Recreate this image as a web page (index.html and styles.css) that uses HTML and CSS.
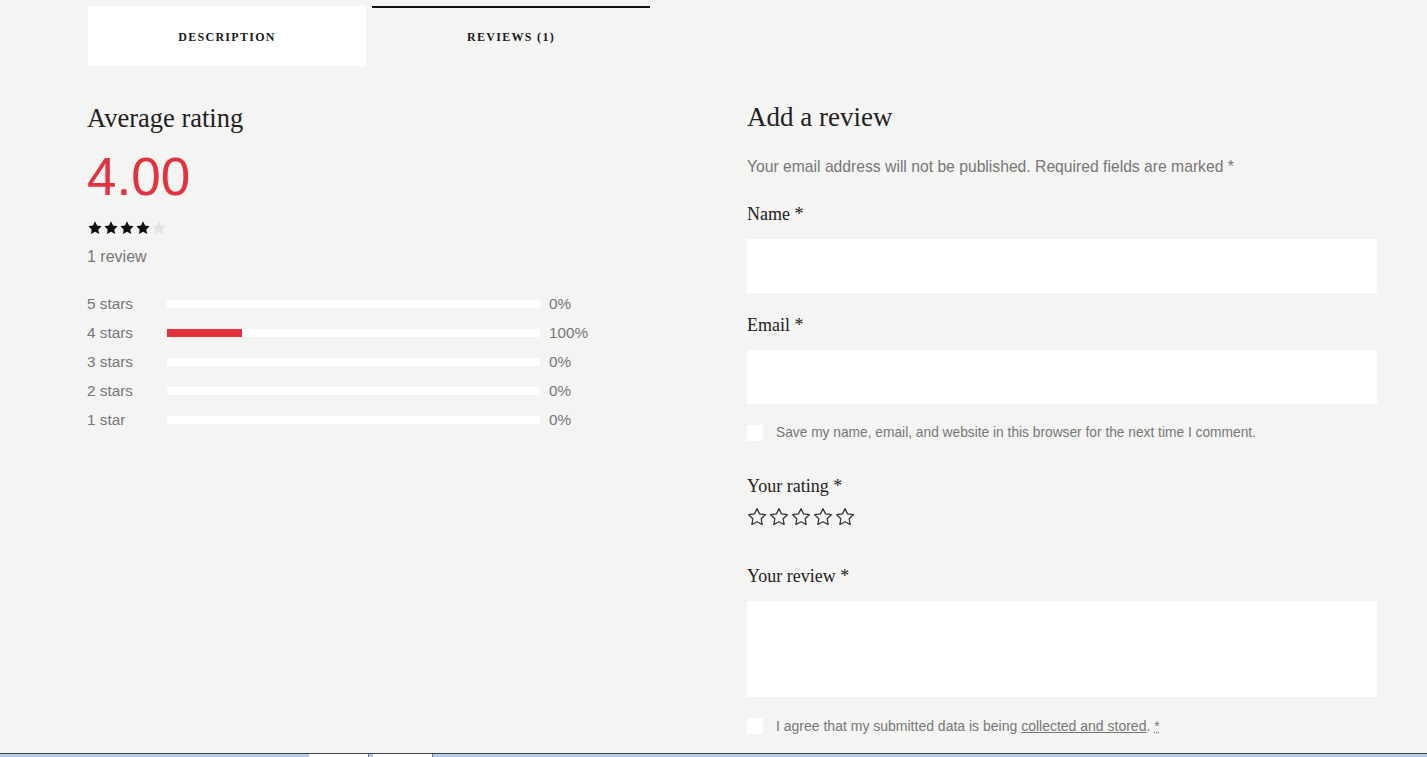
FILE: index.html
```html
<!DOCTYPE html>
<html lang="en">
<head>
    <meta charset="UTF-8">
    <meta name="viewport" content="width=device-width, initial-scale=1.0">
    <title>Reviews</title>
    <link rel="stylesheet" href="styles.css">
</head>
<body>
    <div class="page">
        <ul class="tabs">
            <li class="tab">Description</li>
            <li class="tab active">Reviews (1)</li>
        </ul>

        <div class="reviews">
            <div class="summary">
                <h2 class="title">Average rating</h2>
                <div class="average">4.00</div>
                <div class="stars-small">
                    <svg viewBox="0 0 24 24"><polygon class="on" points="12,2 15.09,8.26 22,9.27 17,14.14 18.18,21.02 12,17.77 5.82,21.02 7,14.14 2,9.27 8.91,8.26"/></svg>
                    <svg viewBox="0 0 24 24"><polygon class="on" points="12,2 15.09,8.26 22,9.27 17,14.14 18.18,21.02 12,17.77 5.82,21.02 7,14.14 2,9.27 8.91,8.26"/></svg>
                    <svg viewBox="0 0 24 24"><polygon class="on" points="12,2 15.09,8.26 22,9.27 17,14.14 18.18,21.02 12,17.77 5.82,21.02 7,14.14 2,9.27 8.91,8.26"/></svg>
                    <svg viewBox="0 0 24 24"><polygon class="on" points="12,2 15.09,8.26 22,9.27 17,14.14 18.18,21.02 12,17.77 5.82,21.02 7,14.14 2,9.27 8.91,8.26"/></svg>
                    <svg viewBox="0 0 24 24"><polygon class="off" points="12,2 15.09,8.26 22,9.27 17,14.14 18.18,21.02 12,17.77 5.82,21.02 7,14.14 2,9.27 8.91,8.26"/></svg>
                </div>
                <div class="count">1 review</div>

                <div class="bars">
                    <div class="bar-row">
                        <span class="bar-label">5 stars</span>
                        <span class="bar"><span class="fill" style="width:0%"></span></span>
                        <span class="bar-pct">0%</span>
                    </div>
                    <div class="bar-row">
                        <span class="bar-label">4 stars</span>
                        <span class="bar"><span class="fill" style="width:20%"></span></span>
                        <span class="bar-pct">100%</span>
                    </div>
                    <div class="bar-row">
                        <span class="bar-label">3 stars</span>
                        <span class="bar"><span class="fill" style="width:0%"></span></span>
                        <span class="bar-pct">0%</span>
                    </div>
                    <div class="bar-row">
                        <span class="bar-label">2 stars</span>
                        <span class="bar"><span class="fill" style="width:0%"></span></span>
                        <span class="bar-pct">0%</span>
                    </div>
                    <div class="bar-row">
                        <span class="bar-label">1 star</span>
                        <span class="bar"><span class="fill" style="width:0%"></span></span>
                        <span class="bar-pct">0%</span>
                    </div>
                </div>
            </div>

            <form class="review-form">
                <h2 class="title form-title">Add a review</h2>
                <p class="notice">Your email address will not be published. Required fields are marked *</p>

                <label class="field-label" for="name">Name *</label>
                <input class="field" type="text" id="name">

                <label class="field-label" for="email">Email *</label>
                <input class="field" type="email" id="email">

                <div class="check-row">
                    <span class="box"></span>
                    <span>Save my name, email, and website in this browser for the next time I comment.</span>
                </div>

                <label class="field-label rating-label">Your rating *</label>
                <div class="stars-pick">
                    <svg viewBox="0 0 24 24"><polygon points="12,2 15.09,8.26 22,9.27 17,14.14 18.18,21.02 12,17.77 5.82,21.02 7,14.14 2,9.27 8.91,8.26"/></svg>
                    <svg viewBox="0 0 24 24"><polygon points="12,2 15.09,8.26 22,9.27 17,14.14 18.18,21.02 12,17.77 5.82,21.02 7,14.14 2,9.27 8.91,8.26"/></svg>
                    <svg viewBox="0 0 24 24"><polygon points="12,2 15.09,8.26 22,9.27 17,14.14 18.18,21.02 12,17.77 5.82,21.02 7,14.14 2,9.27 8.91,8.26"/></svg>
                    <svg viewBox="0 0 24 24"><polygon points="12,2 15.09,8.26 22,9.27 17,14.14 18.18,21.02 12,17.77 5.82,21.02 7,14.14 2,9.27 8.91,8.26"/></svg>
                    <svg viewBox="0 0 24 24"><polygon points="12,2 15.09,8.26 22,9.27 17,14.14 18.18,21.02 12,17.77 5.82,21.02 7,14.14 2,9.27 8.91,8.26"/></svg>
                </div>

                <label class="field-label review-label" for="review">Your review *</label>
                <textarea class="field area" id="review"></textarea>

                <div class="check-row consent">
                    <span class="box"></span>
                    <span>I agree that my submitted data is being <a href="#">collected and stored</a>. <abbr title="required">*</abbr></span>
                </div>
            </form>
        </div>
    </div>

    <div class="taskbar">
        <span class="task"></span>
        <span class="task"></span>
    </div>
</body>
</html>
```

FILE: styles.css
```css
html{
    height: 100%;
}
body{
    margin: 0;
    min-height: 100%;
    background-color: #f4f4f2;
    font-family: "Liberation Sans", Arial, sans-serif;
    color: #777;
}
.page{
    padding: 6px 50px 40px 87px;
}
.tabs{
    display: flex;
    gap: 6px;
    list-style: none;
    margin: 0;
    padding: 0 0 0 1px;
}
.tab{
    box-sizing: border-box;
    width: 278px;
    height: 60px;
    padding-top: 3px;
    display: flex;
    align-items: center;
    justify-content: center;
    font-family: "Liberation Serif", "Times New Roman", serif;
    font-weight: bold;
    font-size: 12px;
    letter-spacing: 1.3px;
    text-transform: uppercase;
    color: #1a1a1a;
    background-color: #fff;
}
.tab.active{
    background-color: transparent;
    border-top: 2px solid #111;
    padding-top: 1px;
}
.reviews{
    display: grid;
    grid-template-columns: 1fr 630px;
    column-gap: 30px;
    margin-top: 37px;
}
.title{
    margin: 0;
    font-family: "Liberation Serif", "Times New Roman", serif;
    font-weight: normal;
    font-size: 26.5px;
    line-height: 31px;
    color: #222;
}
.average{
    margin-top: 13px;
    font-size: 53px;
    line-height: 60px;
    color: #e0323f;
}
.stars-small{
    display: flex;
    margin-top: 13px;
    height: 16px;
}
.stars-small svg{
    width: 16px;
    height: 16px;
}
.stars-small .on{
    fill: #111;
}
.stars-small .off{
    fill: #e2e2e2;
}
.count{
    margin-top: 10px;
    font-size: 16px;
    line-height: 22px;
}
.bars{
    margin-top: 21px;
}
.bar-row{
    display: flex;
    align-items: center;
    height: 29px;
    font-size: 15.3px;
}
.bar-label{
    width: 80px;
}
.bar{
    width: 373px;
    height: 8px;
    background-color: #fff;
    display: flex;
}
.fill{
    height: 100%;
    background-color: #e0323f;
}
.bar-pct{
    margin-left: 9px;
}
.review-form{
    display: flex;
    flex-direction: column;
}
.form-title{
    font-size: 27px;
    line-height: 28px;
}
.notice{
    margin: 25px 0 0;
    font-size: 15.7px;
    line-height: 22px;
}
.field-label{
    margin-top: 24px;
    font-family: "Liberation Serif", "Times New Roman", serif;
    font-size: 18px;
    line-height: 24px;
    color: #222;
}
.field{
    box-sizing: border-box;
    margin-top: 13px;
    height: 54px;
    border: none;
    background-color: #fff;
    font-family: inherit;
}
.field-label + .field + .field-label{
    margin-top: 20px;
}
.check-row{
    display: flex;
    align-items: center;
    gap: 13px;
    margin-top: 18px;
    font-size: 13.75px;
    line-height: 22px;
}
.box{
    width: 16px;
    height: 16px;
    background-color: #fff;
    flex-shrink: 0;
}
.rating-label{
    margin-top: 30px;
}
.stars-pick{
    display: flex;
    gap: 2px;
    margin-top: 9px;
    height: 20px;
}
.stars-pick svg{
    width: 20px;
    height: 20px;
}
.stars-pick polygon{
    fill: none;
    stroke: #333;
    stroke-width: 1.5;
    stroke-linejoin: round;
}
.review-label{
    margin-top: 37px;
}
.area{
    height: 96px;
    resize: none;
}
.consent{
    font-size: 14px;
}
.consent a{
    color: #777;
    text-decoration: underline;
}
.consent abbr{
    text-decoration: underline dotted;
}
.taskbar{
    position: fixed;
    left: 0;
    right: 0;
    bottom: 0;
    height: 3px;
    border-top: 1px solid #3a4350;
    background-color: #b9cce3;
    display: flex;
    gap: 4px;
    padding-left: 309px;
}
.task{
    width: 59px;
    background-color: #fff;
    border-right: 1px solid #6b7a8c;
}
```
